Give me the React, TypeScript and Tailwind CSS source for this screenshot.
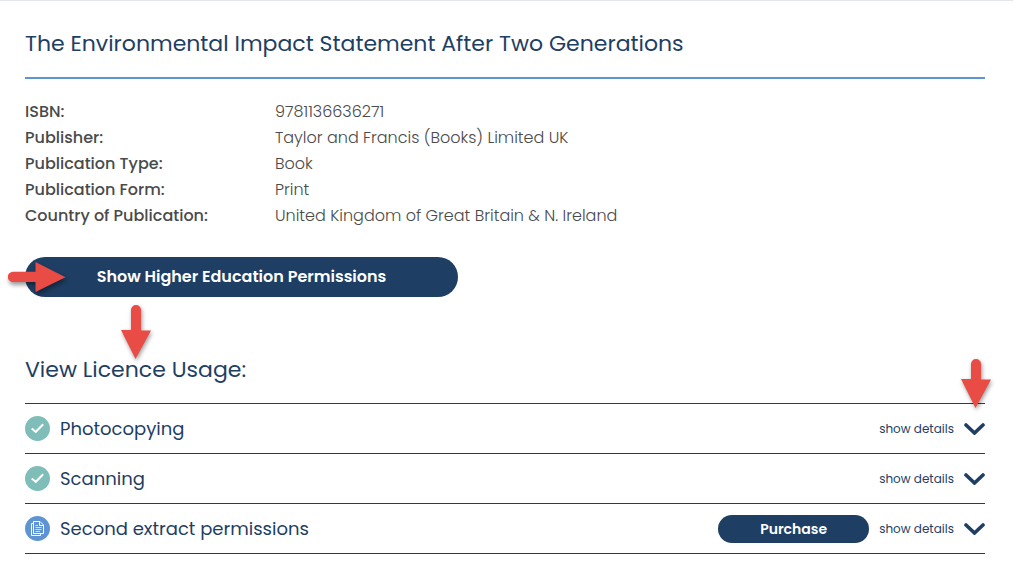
import type { ReactNode } from 'react';

const details = [
  { label: 'ISBN:', value: '9781136636271' },
  { label: 'Publisher:', value: 'Taylor and Francis (Books) Limited UK' },
  { label: 'Publication Type:', value: 'Book' },
  { label: 'Publication Form:', value: 'Print' },
  { label: 'Country of Publication:', value: 'United Kingdom of Great Britain & N. Ireland' },
];

function TickIcon() {
  return (
    <svg className="size-[25px] shrink-0" viewBox="0 0 25 25" aria-hidden="true">
      <circle cx="12.5" cy="12.5" r="12.5" fill="#7fbdb9" />
      <path d="M6.7 12.4 L10.8 15.8 L18.2 8.2" fill="none" stroke="#fff" strokeWidth="2" />
    </svg>
  );
}

function DocumentIcon() {
  return (
    <svg className="size-[25px] shrink-0" viewBox="0 0 25 25" aria-hidden="true">
      <circle cx="12.5" cy="12.5" r="12.5" fill="#5e94d3" />
      <g fill="none" stroke="#fff" strokeWidth="1">
        <path d="M8.5 5.5 H15 L18.5 9 V17.5 H8.5 Z" />
        <path d="M14.5 5.5 V9.5 H18.5" />
        <path d="M8.5 7.5 H6.5 V19.5 H15.5 V17.5" />
        <path d="M10.5 9.5 H13 M10.5 11.5 H16.5 M10.5 13.5 H16.5 M10.5 15.5 H15" strokeOpacity="0.7" />
      </g>
    </svg>
  );
}

function Chevron() {
  return (
    <svg className="h-3 w-[21px]" viewBox="0 0 21 12" aria-hidden="true">
      <path d="M2 2 L10.5 10 L19 2" fill="none" stroke="#1e3e63" strokeWidth="3.6" strokeLinecap="round" />
    </svg>
  );
}

function RightArrow() {
  return (
    <svg
      className="pointer-events-none absolute top-[5px] -left-[17px] h-[30px] w-[58px] drop-shadow-[1px_3px_2px_rgba(0,0,0,0.4)]"
      viewBox="0 0 58 30"
      aria-hidden="true"
    >
      <path d="M5 9.7 H27.5 V0 L57.5 15.3 L27.5 30 V20 H5 A5.1 5.1 0 0 1 5 9.7 Z" fill="#e94b45" />
    </svg>
  );
}

function DownArrow({ length, className }: { length: number; className: string }) {
  const neck = length - 29;
  return (
    <svg
      className={`pointer-events-none absolute drop-shadow-[1px_2px_2px_rgba(0,0,0,0.4)] ${className}`}
      width="30"
      height={length}
      viewBox={`0 0 30 ${length}`}
      aria-hidden="true"
    >
      <path
        d={`M10 5 A5 5 0 0 1 20 5 V${neck + 0.5} H30 L14.5 ${length} L0 ${neck} H10 Z`}
        fill="#e94b45"
      />
    </svg>
  );
}

function UsageRow({ icon, title, children }: { icon: ReactNode; title: string; children?: ReactNode }) {
  return (
    <li className="flex h-[50px] items-center border-b border-[#1e3e63]">
      {icon}
      <h3 className="ml-[10px] text-lg">{title}</h3>
      <div className="ml-auto flex items-center gap-[10px]">
        {children}
        <button type="button" aria-label={`show details for ${title}`} className="flex items-center gap-[10px] text-xs">
          show details
          <Chevron />
        </button>
      </div>
    </li>
  );
}

export default function App() {
  return (
    <main className="border-t border-[#e2e6ea] bg-white pr-7 pb-6 pl-[25px] font-['Poppins','Inter',sans-serif] text-[#1e3e63]">
      <h1 className="border-b-2 border-[#5e94d3] pt-[27px] pb-[17px] text-[22px] leading-8">
        The Environmental Impact Statement After Two Generations
      </h1>

      <dl className="mt-5 text-base leading-[26px] text-[#4a4a4a]">
        {details.map((item) => (
          <div key={item.label} className="flex">
            <dt className="w-[250px] shrink-0 font-medium">{item.label}</dt>
            <dd className="font-light">{item.value}</dd>
          </div>
        ))}
      </dl>

      <div className="relative mt-7 w-full max-w-[433px]">
        <button type="button" className="h-10 w-full rounded-full bg-[#1e3e63] text-base font-semibold text-white">
          Show Higher Education Permissions
        </button>
        <RightArrow />
        <DownArrow length={54} className="top-12 left-24" />
      </div>

      <h2 className="mt-[57px] text-[22px] leading-8">View Licence Usage:</h2>

      <div className="relative mt-[17px]">
        <ul className="border-t border-[#1e3e63]">
          <UsageRow icon={<TickIcon />} title="Photocopying" />
          <UsageRow icon={<TickIcon />} title="Scanning" />
          <UsageRow icon={<DocumentIcon />} title="Second extract permissions">
            <button type="button" className="h-7 w-[151px] rounded-full bg-[#1e3e63] text-sm font-semibold text-white">
              Purchase
            </button>
          </UsageRow>
        </ul>
        <DownArrow length={49} className="-top-11 -right-1.5" />
      </div>
    </main>
  );
}
